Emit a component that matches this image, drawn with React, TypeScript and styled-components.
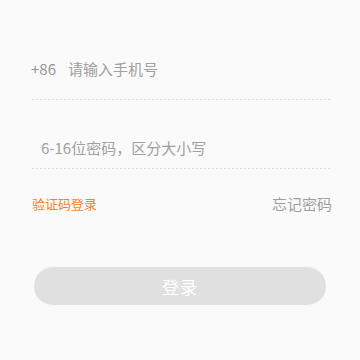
import styled, { createGlobalStyle } from "styled-components";

const GlobalStyle = createGlobalStyle`
  html, body {
    margin: 0;
    padding: 0;
    background: #fafafa;
  }
  body {
    font-family: "Noto Sans CJK SC", "Noto Sans", sans-serif;
  }
`;

export const Page = styled.div`
  width: 360px;
  height: 360px;
  box-sizing: border-box;
  padding: 39px 28px 0 32px;
  background: #fafafa;
`;

export const Field = styled.div<{ $h: number; $pb: number; $indent?: number }>`
  display: flex;
  align-items: flex-end;
  height: ${(p) => p.$h}px;
  box-sizing: border-box;
  padding-bottom: ${(p) => p.$pb}px;
  padding-left: ${(p) => p.$indent || 0}px;
  font-size: 15px;
  line-height: 20px;
  color: #a0a0a0;
`;

export const Prefix = styled.span`
  color: #959595;
  margin-left: -1px;
  width: 37px;
`;

export const Divider = styled.div`
  height: 1px;
  width: 298px;
  background-image: linear-gradient(to right, #dcdcdc 50%, transparent 50%);
  background-size: 4px 1px;
  background-repeat: repeat-x;
`;

export const LinkRow = styled.div`
  display: flex;
  justify-content: space-between;
  align-items: center;
  height: 20px;
  margin-top: 24px;
`;

export const TextLink = styled.a<{ $accent?: boolean }>`
  font-size: ${(p) => (p.$accent ? 13 : 15)}px;
  color: ${(p) => (p.$accent ? "#ff7d22" : "#9e9e9e")};
  text-decoration: none;
  cursor: pointer;
`;

export const Submit = styled.button`
  display: block;
  margin: 54px 0 0 2px;
  width: 292px;
  height: 38px;
  border: none;
  border-radius: 19px;
  background: #e0e0e0;
  color: #ffffff;
  font-family: inherit;
  font-size: 17px;
  letter-spacing: 1px;
`;

export default function App() {
  return (
    <>
      <GlobalStyle />
      <Page>
        <Field $h={60} $pb={20}>
          <Prefix>+86</Prefix>
          <span>请输入手机号</span>
        </Field>
        <Divider />
        <Field $h={68} $pb={10} $indent={9}>
          6-16位密码，区分大小写
        </Field>
        <Divider />
        <LinkRow>
          <TextLink $accent>验证码登录</TextLink>
          <TextLink>忘记密码</TextLink>
        </LinkRow>
        <Submit>登录</Submit>
      </Page>
    </>
  );
}
